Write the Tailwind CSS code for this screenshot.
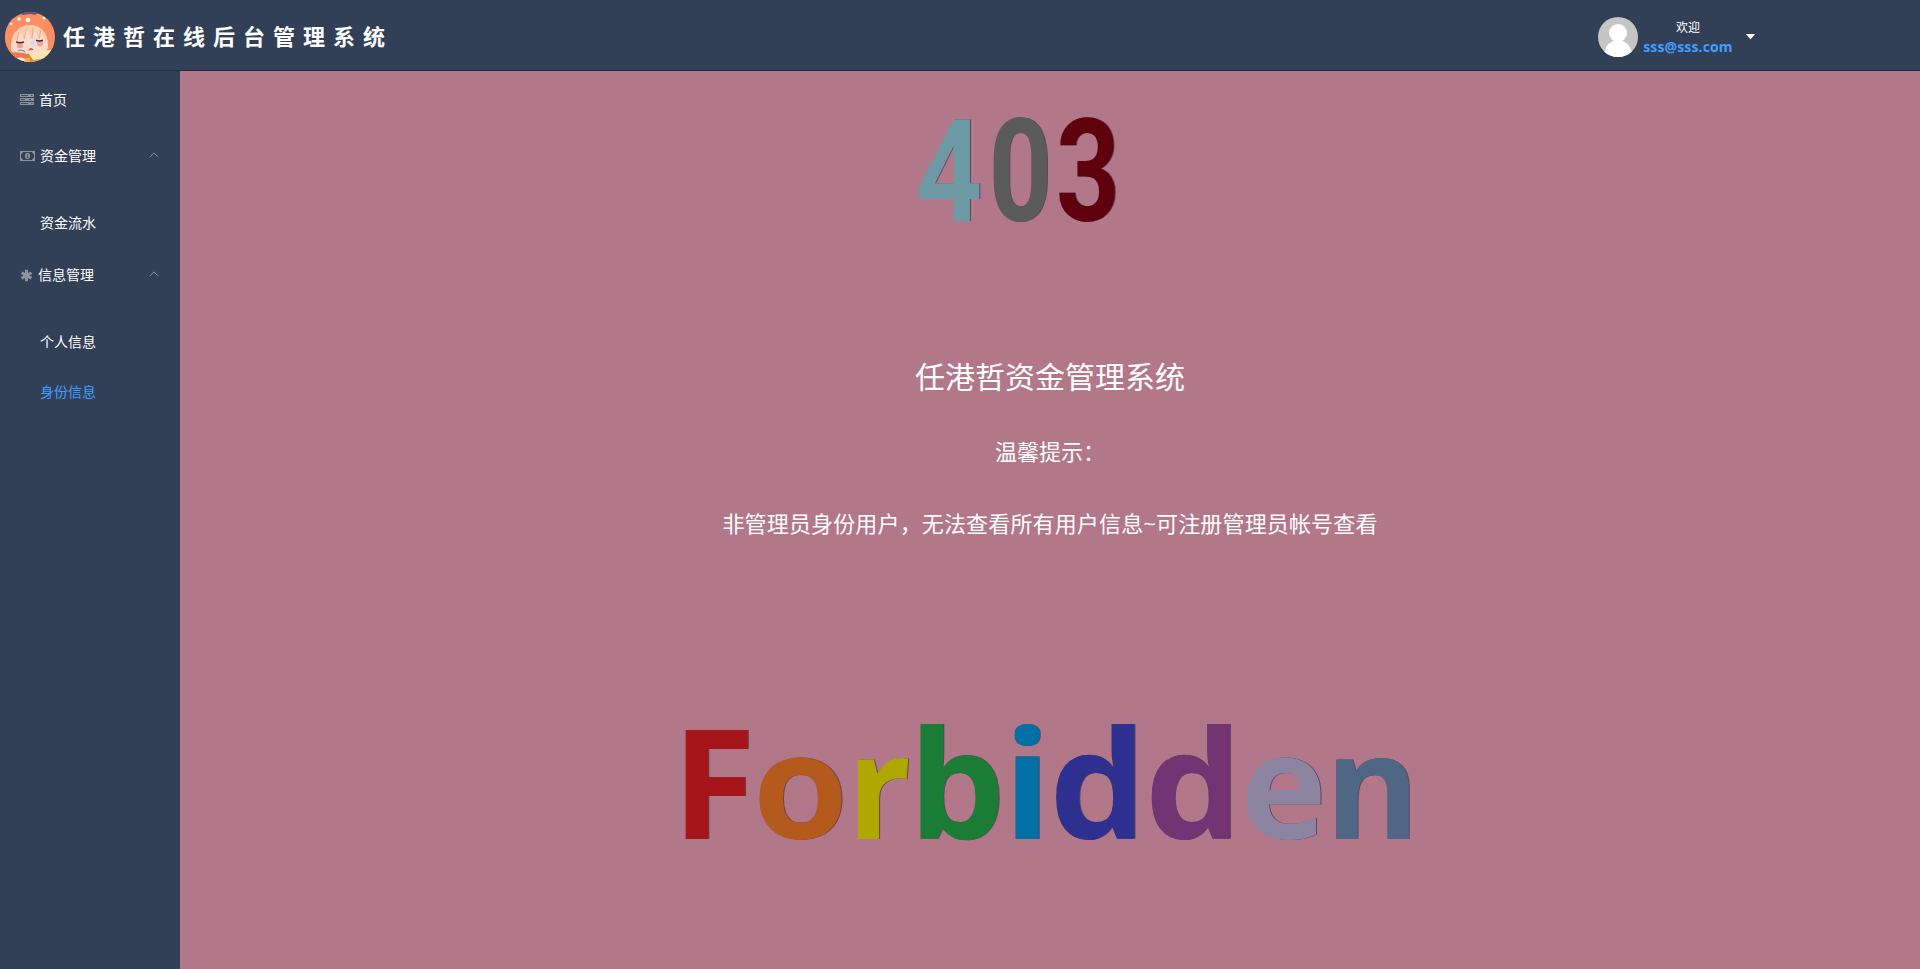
<!DOCTYPE html>
<html lang="zh-CN">
<head>
<meta charset="utf-8">
<title>任港哲在线后台管理系统</title>
<script src="https://cdn.jsdelivr.net/npm/@tailwindcss/browser@4"></script>
</head>
<body class="h-screen overflow-hidden flex flex-col font-['Open_Sans','Noto_Sans_CJK_SC',sans-serif] text-white">
<header class="h-[71px] shrink-0 bg-[#324057] border-b border-[#1f2d3d] flex items-center pt-[3px] pl-[5px] pr-[165px]">
  <svg class="size-[50px] shrink-0" viewBox="0 0 50 50">
    <defs><clipPath id="c"><circle cx="25" cy="25" r="25"/></clipPath></defs>
    <g clip-path="url(#c)">
      <rect width="50" height="50" fill="#fb8f63"/>
      <path d="M10 0H34L30 3H18Z" fill="#66507f"/><path d="M36 0H50V16L43 7Z" fill="#dce5f3"/>
      <path d="M0 0H14L5 10L0 18Z" fill="#c8c4d8"/>
      <path d="M0 18Q6 3 25 2Q44 4 49 20L48 50H0Z" fill="#fb8f63"/>
      <path d="M6 38Q5 15 25 13Q43 15 43 36L40 42H9Z" fill="#fddbc8"/>
      <path d="M6 36Q7 15 25 13Q42 14 43 32L39 25L36 18L34 27L30 17L27 27L22 17L19 27L15 20L12 29L9 27Z" fill="#f9ccae"/>
      <path d="M19 27L22 16M27 27L28 16M34 27L36 18M12 29L14 20" stroke="#dda184" stroke-width=".7" fill="none"/>
      <circle cx="23" cy="8" r="2.3" fill="#f8f2eb"/><circle cx="14" cy="7" r="1.7" fill="#f8f2eb"/><circle cx="6" cy="12" r="1.2" fill="#f8f2eb"/><circle cx="39" cy="6" r="1.6" fill="#f8f2eb"/>
      <circle cx="15" cy="33.5" r="3" fill="#f99d9c"/><circle cx="35" cy="31.5" r="3" fill="#f99d9c"/><circle cx="28" cy="31" r="2.6" fill="#c5dff0"/>
      <path d="M11 30Q15 31.5 19 30M31 28.3Q34 29.5 38 28.3" stroke="#3e3037" stroke-width="1.5" fill="none"/>
      <path d="M23 38.5Q26 34 28.5 38Z" fill="#cb5560"/>
      <path d="M13 39Q17 37 20 40" stroke="#6b9fc0" stroke-width="1.3" fill="none"/>
      <path d="M3 41Q14 39 26 43L24 46H10Z" fill="#ed7550"/>
      <path d="M23 41L46 38L43 46L28 48Z" fill="#fae6ae"/><path d="M23 41L28 48L26 50L22 43Z" fill="#cf8b3f"/>
      <path d="M12 46Q18 44 24 50H15Z" fill="#f8e8df"/><path d="M20 46H25V50H19Z" fill="#f0b43d"/>
    </g>
  </svg>
  <h1 class="ml-[8px] -mt-px text-[22px] leading-[30px] font-bold tracking-[8px] whitespace-nowrap">任港哲在线后台管理系统</h1>
  <div class="ml-auto flex items-center">
    <svg class="size-10" viewBox="0 0 40 40"><defs><clipPath id="u"><circle cx="20" cy="20" r="20"/></clipPath></defs><g clip-path="url(#u)"><rect width="40" height="40" fill="#c5c5c5"/><g fill="#fff"><circle cx="20" cy="16" r="9"/><path d="M6 40Q6 28 15 24H25Q34 28 34 40Z"/></g></g></svg>
    <div class="ml-[5px] mt-[3px] w-[90px] flex flex-col items-center whitespace-nowrap">
      <p class="text-xs leading-[18px]">欢迎</p>
      <p class="text-[14px] tracking-[.15px] leading-5 font-bold text-[#409eff]">sss@sss.com</p>
    </div>
    <svg class="ml-[13px] w-[9px] h-[6px]" viewBox="0 0 9 6"><path d="M0 0H9L4.5 5.5Z" fill="#fff"/></svg>
  </div>
</header>
<div class="flex flex-1 min-h-0">
  <nav class="w-[180px] shrink-0 bg-[#324057] text-[14px] leading-5">
    <a class="mt-px h-14 flex items-center pl-5">
      <svg class="w-[14px] h-[12px] mr-[5px]" viewBox="0 0 14 12"><path d="M0 0H14V3H0ZM0 4H14V7H0ZM0 8H14V11H0Z" fill="#909399"/><path d="M1 1.5H8M1 5.5H5M1 9.5H8M11 1.5H12.5M9 5.5H11M11 9.5H12.5" stroke="#324057" stroke-width=".9"/></svg>首页</a>
    <div class="h-14 flex items-center pl-5 pr-[21px]">
      <svg class="w-[15px] h-[10px] mr-[5px]" viewBox="0 0 15 10"><path fill="#909399" fill-rule="evenodd" d="M0 0H15V10H0ZM3 1Q2.8 2.6 1 3V7Q2.8 7.4 3 9H12Q12.2 7.4 14 7V3Q12.2 2.6 12 1Z"/><ellipse cx="7.5" cy="5" rx="2.5" ry="3.2" fill="#909399"/><path d="M6.7 3.8L7.6 3.2V6.5M6.5 6.7H8.7" stroke="#324057" stroke-width=".8" fill="none"/></svg>资金管理
      <svg class="ml-auto mb-[3px] w-[10px] h-[6px]" viewBox="0 0 10 6"><path d="M.7 5.2L5 .9L9.3 5.2" fill="none" stroke="#909399"/></svg></div>
    <a class="mt-[14px] h-[50px] flex items-center pl-10">资金流水</a>
    <div class="-mt-px h-14 flex items-center pl-5 pr-[21px]">
      <svg class="w-[13px] h-[13px] mr-[5px]" viewBox="0 0 13 13"><path d="M6.5 .7V12.3M1.6 3.7L11.4 9.3M11.4 3.7L1.6 9.3" stroke="#909399" stroke-width="3"/></svg>信息管理
      <svg class="ml-auto mb-[3px] w-[10px] h-[6px]" viewBox="0 0 10 6"><path d="M.7 5.2L5 .9L9.3 5.2" fill="none" stroke="#909399"/></svg></div>
    <a class="mt-[14px] h-[50px] flex items-center pl-10">个人信息</a>
    <a class="h-[50px] flex items-center pl-10 text-[#409eff]">身份信息</a>
  </nav>
  <main class="flex-1 bg-[#b2788a] flex flex-col items-center">
    <svg class="w-[1740px] h-[229px] shrink-0 font-['Roboto'] font-bold text-[146px] drop-shadow-[1px_0_0_rgba(10,20,50,.5)]" viewBox="180 71 1740 229">
      <text transform="translate(918 221) scale(.8 .985)" x="-3" fill="#6c99a4">4</text>
      <text transform="translate(993 220.5) scale(.76 .98)" x="-6" fill="#5b5b5b">0</text>
      <text transform="translate(1059.5 220.5) scale(.77 .98)" x="-5" fill="#5f000d">3</text>
    </svg>
    <h2 class="mt-[55px] text-[30px] leading-[44px]">任港哲资金管理系统</h2>
    <p class="mt-[34px] text-[22px] leading-9">温馨提示：</p>
    <p class="mt-9 text-[22px] tracking-[.15px] leading-9 whitespace-nowrap">非管理员身份用户，无法查看所有用户信息~可注册管理员帐号查看</p>
    <svg class="mt-[59px] w-[1740px] h-[300px] shrink-0 font-['Open_Sans'] font-bold text-[152px] drop-shadow-[1px_0_0_rgba(10,20,50,.5)]" viewBox="180 600 1740 300">
      <text x="672" y="839" fill="#a61519">F</text>
      <text transform="translate(759.5 839) scale(1.02 .955)" x="-6.8" fill="#b35a1c">o</text>
      <text transform="translate(858 839) scale(.93 .955)" x="-11.9" fill="#b0a800">r</text>
      <text transform="translate(920.5 839) scale(1.01 .99)" x="-11.9" fill="#1b7d35">b</text>
      <text transform="translate(1014.5 839) scale(1.03 .99)" x="-10.9" fill="#0070a6">i</text>
      <text transform="translate(1056 839) scale(1.01 .99)" x="-6.8" fill="#2d308f">d</text>
      <text transform="translate(1151.5 839) scale(1.01 .99)" x="-6.8" fill="#723473">d</text>
      <text transform="translate(1247 839) scale(.96 .955)" x="-6.8" fill="#8d84a2">e</text>
      <text transform="translate(1336 839) scale(.95 .955)" x="-11.9" fill="#4f6685">n</text>
    </svg>
  </main>
</div>
</body>
</html>
